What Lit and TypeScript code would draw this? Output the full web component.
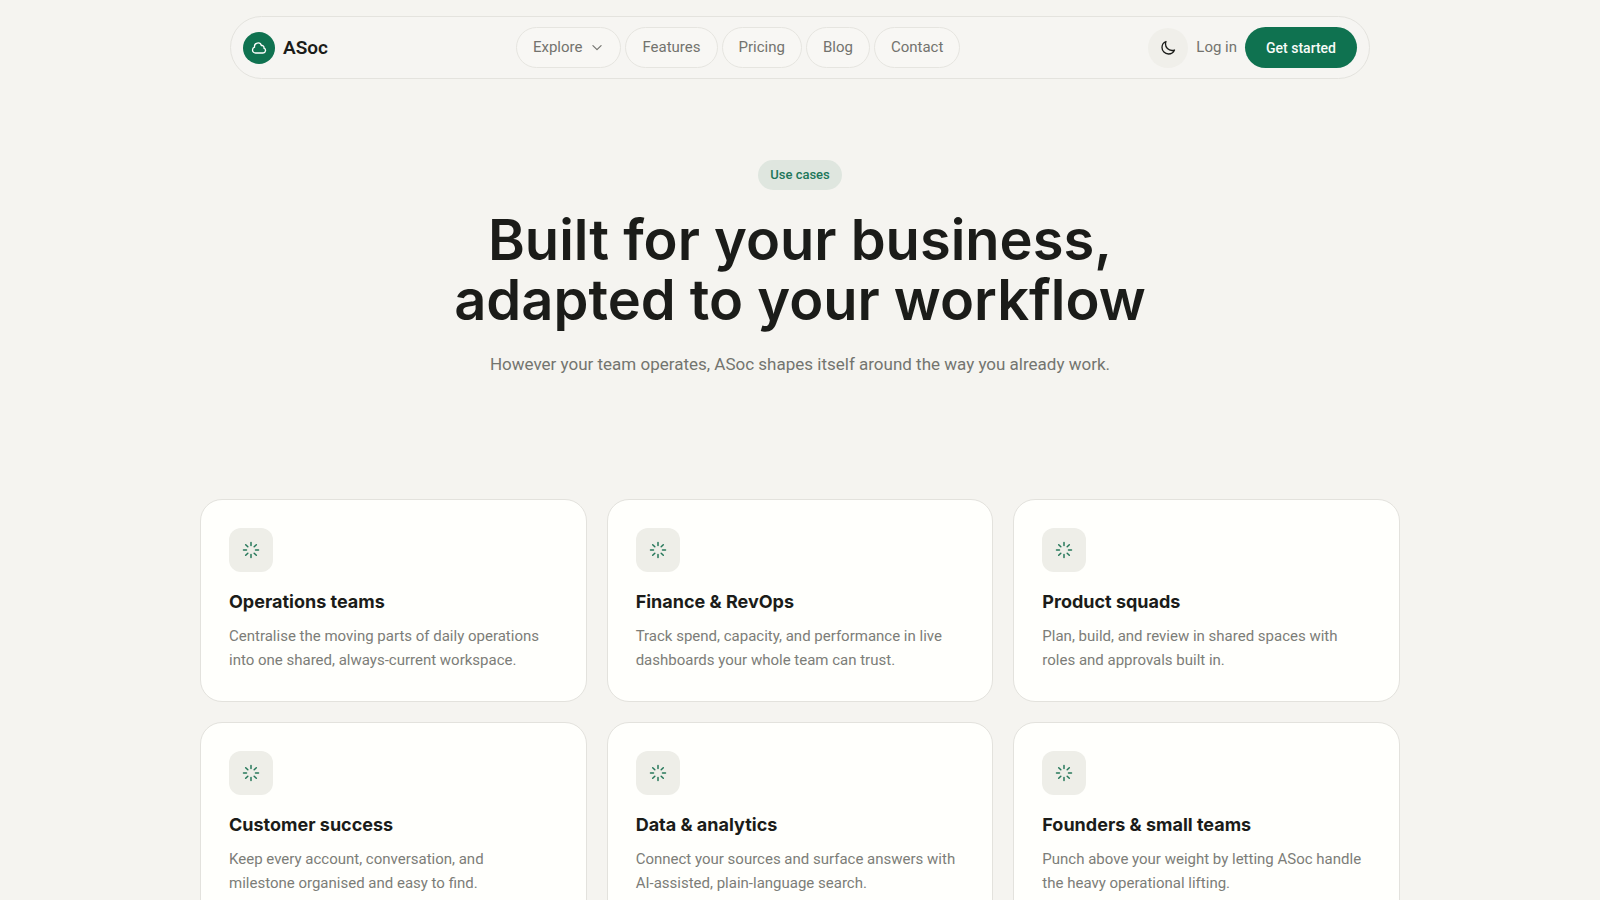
import { LitElement, html, css, svg } from "lit";
import { customElement, property } from "lit/decorators.js";

interface UseCase {
  title: string;
  text: string;
}

const NAV_LINKS = ["Features", "Pricing", "Blog", "Contact"];

const USE_CASES: UseCase[] = [
  { title: "Operations teams", text: "Centralise the moving parts of daily operations into one shared, always-current workspace." },
  { title: "Finance & RevOps", text: "Track spend, capacity, and performance in live dashboards your whole team can trust." },
  { title: "Product squads", text: "Plan, build, and review in shared spaces with roles and approvals built in." },
  { title: "Customer success", text: "Keep every account, conversation, and milestone organised and easy to find." },
  { title: "Data & analytics", text: "Connect your sources and surface answers with AI-assisted, plain-language search." },
  { title: "Founders & small teams", text: "Punch above your weight by letting ASoc handle the heavy operational lifting." },
];

const cloudPath = svg`<path d="M2.25 15a4.5 4.5 0 0 0 4.5 4.5H18a3.75 3.75 0 0 0 1.332-7.257 3 3 0 0 0-3.758-3.848 5.25 5.25 0 0 0-10.233 2.33A4.502 4.502 0 0 0 2.25 15Z" />`;
const moonPath = svg`<path d="M21.752 15.002A9.72 9.72 0 0 1 18 15.75c-5.385 0-9.75-4.365-9.75-9.75 0-1.33.266-2.597.748-3.752A9.753 9.753 0 0 0 3 11.25C3 16.635 7.365 21 12.75 21a9.753 9.753 0 0 0 9.002-5.998Z" />`;
const chevronPath = svg`<path d="m5 9.5 7 7 7-7" />`;
const burstPath = svg`<path d="M12 2v4M12 18v4M2 12h4M18 12h4M4.93 4.93l2.83 2.83M16.24 16.24l2.83 2.83M4.93 19.07l2.83-2.83M16.24 7.76l2.83-2.83" />`;

@customElement("site-header")
export class SiteHeader extends LitElement {
  static styles = css`
    :host {
      display: block;
      padding: 16px 24px 0;
    }
    .bar {
      box-sizing: border-box;
      max-width: 1140px;
      margin: 0 auto;
      padding: 10px 12px;
      display: flex;
      align-items: center;
      justify-content: space-between;
      border: 1px solid #e4e3de;
      border-radius: 32px;
      background: #f6f5f2;
    }
    a {
      color: inherit;
      text-decoration: none;
    }
    svg {
      display: block;
      fill: none;
      stroke: currentColor;
      stroke-linecap: round;
      stroke-linejoin: round;
    }
    .brand {
      display: flex;
      align-items: center;
      gap: 8px;
      font-size: 19px;
      font-weight: 600;
      color: #1b1c19;
    }
    .logo {
      display: grid;
      place-items: center;
      width: 32px;
      height: 32px;
      border-radius: 50%;
      background: #0f7250;
      color: #fff;
    }
    .links,
    .actions {
      display: flex;
      align-items: center;
    }
    .links {
      gap: 4px;
    }
    .actions {
      gap: 8px;
    }
    .pill {
      box-sizing: border-box;
      display: flex;
      align-items: center;
      gap: 8px;
      height: 41px;
      padding: 0 16px 2px;
      border: 1px solid #e6e5e0;
      border-radius: 21px;
      background: #f8f7f4;
      color: #73736e;
      font: inherit;
      font-size: 15px;
    }
    .theme {
      display: grid;
      place-items: center;
      width: 40px;
      height: 40px;
      padding: 0;
      border: 0;
      border-radius: 50%;
      background: #f0efea;
      color: #1b1c19;
    }
    .login {
      color: #73736e;
      font-size: 15px;
      padding-bottom: 2px;
    }
    .cta {
      display: flex;
      align-items: center;
      height: 41px;
      padding: 0 21px;
      border-radius: 21px;
      background: #0f7250;
      color: #f8fbf8;
      font-size: 14px;
      font-weight: 500;
    }
  `;

  render() {
    return html`
      <header class="bar">
        <a class="brand" href="#">
          <span class="logo">
            <svg width="16" height="16" viewBox="0 0 24 24" stroke-width="2">${cloudPath}</svg>
          </span>
          ASoc
        </a>
        <nav class="links" aria-label="Main">
          <button class="pill" type="button" aria-haspopup="true">
            Explore
            <svg width="14" height="14" viewBox="0 0 24 24" stroke-width="2">${chevronPath}</svg>
          </button>
          ${NAV_LINKS.map((label) => html`<a class="pill" href="#">${label}</a>`)}
        </nav>
        <div class="actions">
          <button class="theme" type="button" aria-label="Toggle theme">
            <svg width="16" height="16" viewBox="0 0 24 24" stroke-width="2">${moonPath}</svg>
          </button>
          <a class="login" href="#">Log in</a>
          <a class="cta" href="#">Get started</a>
        </div>
      </header>
    `;
  }
}

@customElement("use-case-card")
export class UseCaseCard extends LitElement {
  @property() heading = "";
  @property() text = "";

  static styles = css`
    :host {
      display: block;
      padding: 28px 28px 29px;
      border: 1px solid #e3e2dd;
      border-radius: 22px;
      background: #fffffc;
    }
    .icon {
      display: grid;
      place-items: center;
      width: 44px;
      height: 44px;
      border-radius: 12px;
      background: #eeeee8;
      color: #26785a;
    }
    svg {
      display: block;
      fill: none;
      stroke: currentColor;
      stroke-linecap: round;
    }
    h2 {
      margin: 18px 0 10px;
      font-family: Inter, "Liberation Sans", sans-serif;
      font-size: 18px;
      line-height: 24px;
      font-weight: 700;
      color: #1b1c19;
    }
    p {
      margin: 0;
      padding-right: 8px;
      font-size: 15px;
      line-height: 24px;
      color: #7c7d78;
    }
  `;

  render() {
    return html`
      <div class="icon">
        <svg width="18" height="18" viewBox="0 0 24 24" stroke-width="2">${burstPath}</svg>
      </div>
      <h2>${this.heading}</h2>
      <p>${this.text}</p>
    `;
  }
}

@customElement("app-root")
export class AppRoot extends LitElement {
  static styles = css`
    :host {
      display: block;
      min-height: 100vh;
      background: #f5f4f0;
      color: #1b1c19;
      font-family: Roboto, "Liberation Sans", sans-serif;
    }
    .hero {
      padding: 81px 24px 0;
      display: flex;
      flex-direction: column;
      align-items: center;
      text-align: center;
    }
    .badge {
      padding: 0 12px;
      border-radius: 15px;
      background: #dfe6df;
      color: #21775a;
      font-size: 13px;
      line-height: 30px;
      font-weight: 500;
    }
    h1 {
      max-width: 760px;
      margin: 20px 0 0;
      font-family: Inter, "Liberation Sans", sans-serif;
      font-size: 56px;
      line-height: 60px;
      font-weight: 600;
      text-wrap: balance;
    }
    .lead {
      margin: 20px 0 0;
      color: #73746f;
      font-size: 17px;
      line-height: 28px;
    }
    .grid {
      box-sizing: border-box;
      max-width: 1248px;
      margin: 0 auto;
      padding: 121px 24px 96px;
      display: grid;
      grid-template-columns: repeat(auto-fit, minmax(320px, 1fr));
      gap: 20px;
    }
  `;

  render() {
    return html`
      <site-header></site-header>
      <main>
        <section class="hero">
          <span class="badge">Use cases</span>
          <h1>Built for your business, adapted to your workflow</h1>
          <p class="lead">However your team operates, ASoc shapes itself around the way you already work.</p>
        </section>
        <section class="grid" aria-label="Use cases">
          ${USE_CASES.map((item) => html`<use-case-card .heading=${item.title} .text=${item.text}></use-case-card>`)}
        </section>
      </main>
    `;
  }
}
